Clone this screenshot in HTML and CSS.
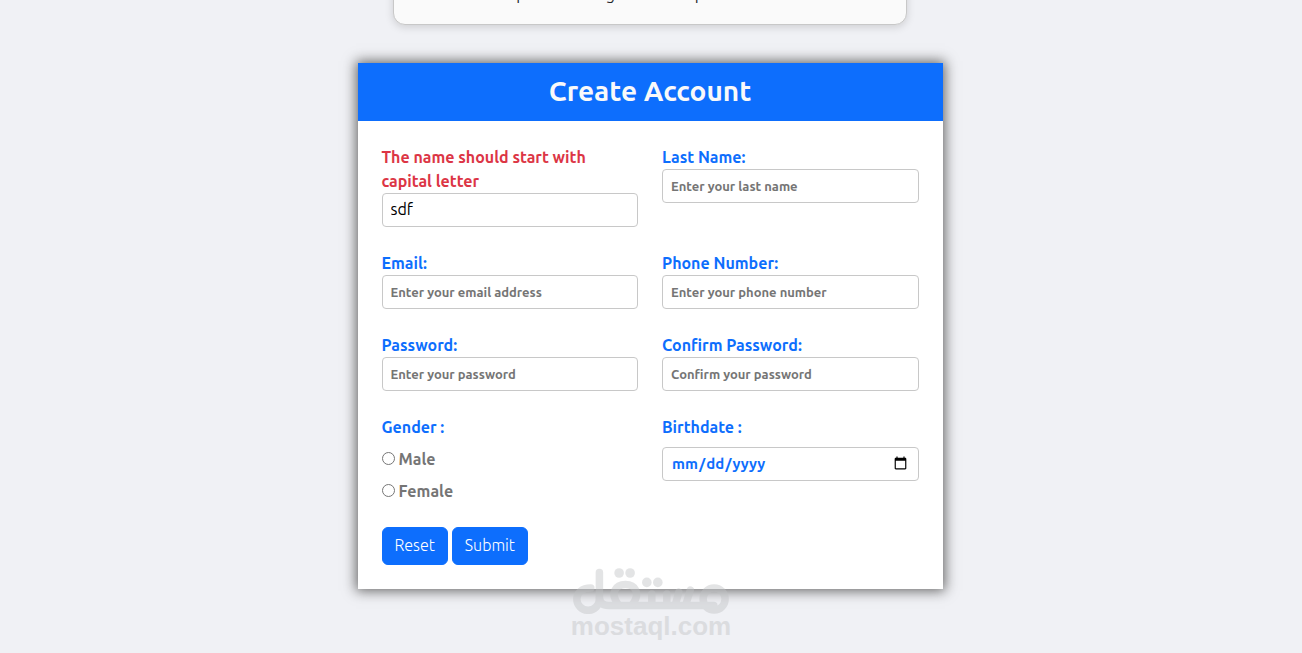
FILE: index.html
```html
<!DOCTYPE html>
<html lang="en">
<head>
  <meta charset="UTF-8">
  <title>Create Account</title>
  <link rel="stylesheet" href="styles.css">
</head>
<body>
  <div class="intro-card">
    <p class="intro-text"><span>p</span><span>g</span><span>p</span></p>
  </div>

  <form class="account-form">
    <h1>Create Account</h1>

    <div class="form-body">
      <div class="form-group">
        <label for="firstName" class="error">The name should start with capital letter</label>
        <input type="text" id="firstName" value="sdf">
      </div>
      <div class="form-group">
        <label for="lastName">Last Name:</label>
        <input type="text" id="lastName" placeholder="Enter your last name">
      </div>
      <div class="form-group">
        <label for="email">Email:</label>
        <input type="email" id="email" placeholder="Enter your email address">
      </div>
      <div class="form-group">
        <label for="phone">Phone Number:</label>
        <input type="tel" id="phone" placeholder="Enter your phone number">
      </div>
      <div class="form-group">
        <label for="password">Password:</label>
        <input type="password" id="password" placeholder="Enter your password">
      </div>
      <div class="form-group">
        <label for="confirm">Confirm Password:</label>
        <input type="password" id="confirm" placeholder="Confirm your password">
      </div>
      <fieldset class="form-group spaced">
        <legend>Gender :</legend>
        <div class="radio">
          <input type="radio" name="gender" id="male">
          <label for="male">Male</label>
        </div>
        <div class="radio">
          <input type="radio" name="gender" id="female">
          <label for="female">Female</label>
        </div>
      </fieldset>
      <div class="form-group spaced">
        <label for="birthdate">Birthdate :</label>
        <input type="date" id="birthdate">
      </div>
      <div class="buttons">
        <button type="reset">Reset</button>
        <button type="submit">Submit</button>
      </div>
    </div>
  </form>

  <div class="watermark">
    <svg viewBox="0 0 158 46" width="158" height="46" aria-hidden="true">
      <g fill="none" stroke="currentColor" stroke-width="7.5" stroke-linecap="round">
        <path d="M19 20C10 20 5 25 5 31a11.3 11.3 0 0 0 22.600 0V4.500"/>
        <path d="M27.600 30C28 35 31 37.500 37 37.500H142"/>
        <path d="M46 36C38 25 44 16.500 53.600 16.500S69 25 61 36"/>
        <path d="M80 26v9M95 26v9M107 24l-3 11M118.500 22l-4 13"/>
        <circle cx="142.300" cy="31" r="11"/>
      </g>
      <g fill="currentColor">
        <circle cx="47.300" cy="5" r="4.800"/>
        <circle cx="58.300" cy="5" r="4.800"/>
        <circle cx="75" cy="14.400" r="4.800"/>
        <circle cx="86" cy="14.400" r="4.800"/>
      </g>
    </svg>
    <span>mostaql.com</span>
  </div>
</body>
</html>
```

FILE: styles.css
```css
* {
  box-sizing: border-box;
}
body {
  font-family: Ubuntu, "Noto Sans", sans-serif;
  font-size: 16px;
  line-height: 24px;
  margin: 0;
  padding: 0 2px 64px 0;
  background-color: #f0f1f5;
  color: #212529;
}
.intro-card {
  width: 39.5%;
  margin: -19px auto 38px;
  padding: 0 24px 18px;
  background-color: #fafafa;
  border: 1px solid #c8c8c8;
  border-radius: 12px;
  box-shadow: 0 2px 8px rgba(0, 0, 0, 0.15);
}
.intro-text {
  display: flex;
  gap: 80px;
  margin: 0;
  padding-left: 98px;
}
.account-form {
  width: 45%;
  margin: 0 auto;
  background-color: #fff;
  box-shadow: 0 0 12px 2px #666;
}
h1 {
  margin: 0;
  padding: 7px 8px 9px;
  background-color: #0d6efd;
  color: #f8f9fa;
  font-size: 28px;
  font-weight: 600;
  line-height: 42px;
  text-align: center;
}
.form-body {
  display: grid;
  grid-template-columns: 1fr 1fr;
  gap: 24px;
  padding: 24px;
}
.form-group {
  min-width: 0;
  margin: 0;
  padding: 0;
  border: none;
}
label,
legend {
  display: block;
  padding: 0;
  color: #0d6efd;
  font-weight: 600;
}
label.error {
  color: #dc3545;
}
.form-group > input {
  display: block;
  width: 100%;
  height: 34px;
  padding: 2px 8px 4px;
  border: 1px solid #c8c8c8;
  border-radius: 4px;
  background-color: #fff;
  font-family: inherit;
  font-size: 16px;
}
.form-group > input::placeholder {
  color: #757575;
  font-size: 13px;
  font-weight: 600;
}
.spaced > input {
  margin-top: 8px;
}
.form-group > input[type="date"] {
  color: #0d6efd;
  font-size: 15px;
  font-weight: 600;
}
.radio {
  display: flex;
  align-items: center;
  gap: 4px;
  margin-top: 8px;
}
.radio input {
  width: 13px;
  height: 13px;
  margin: 0 0 2px;
}
.radio label {
  color: #757575;
}
.buttons {
  display: flex;
  grid-column: 1 / -1;
  gap: 4px;
}
button {
  height: 38px;
  padding: 0 12px 2px;
  border: 1px solid #0d6efd;
  border-radius: 6px;
  background-color: #0d6efd;
  color: #fff;
  font-family: inherit;
  font-size: 16px;
  font-weight: 300;
  cursor: pointer;
}
.watermark {
  position: absolute;
  top: 568px;
  left: 50%;
  display: flex;
  flex-direction: column;
  align-items: center;
  transform: translateX(-50%);
  color: #c0c2c4;
  font-family: "Liberation Sans", sans-serif;
  font-size: 26px;
  font-weight: 700;
  opacity: 0.43;
  pointer-events: none;
}
```
